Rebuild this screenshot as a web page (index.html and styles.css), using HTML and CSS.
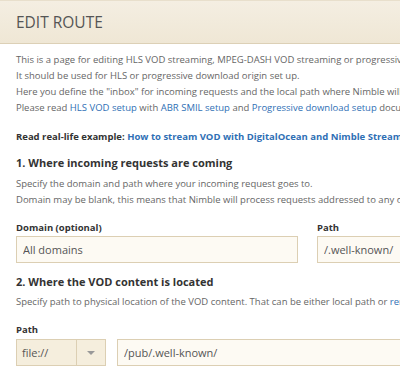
FILE: index.html
```html
<!DOCTYPE html>
<html lang="en">
<head>
    <meta charset="UTF-8">
    <title>Edit route</title>
    <link rel="stylesheet" href="styles.css">
</head>
<body>
<div class="page">
    <div class="page-header">EDIT ROUTE</div>
    <div class="page-body">
        <p class="intro">
            This is a page for editing HLS VOD streaming, MPEG-DASH VOD streaming or progressive download VOD routes.<br>
            It should be used for HLS or progressive download origin set up.<br>
            Here you define the "inbox" for incoming requests and the local path where Nimble will take the content from.<br>
            Please read <a href="#">HLS VOD setup</a> with <a href="#">ABR SMIL setup</a> and <a href="#">Progressive download setup</a> documentation.
        </p>
        <p class="example">Read real-life example: <a href="#">How to stream VOD with DigitalOcean and Nimble Streamer</a></p>

        <h3>1. Where incoming requests are coming</h3>
        <p class="hint">
            Specify the domain and path where your incoming request goes to.<br>
            Domain may be blank, this means that Nimble will process requests addressed to any of your domains.
        </p>
        <div class="row">
            <div class="field">
                <label>Domain (optional)</label>
                <input type="text" class="inp wide" value="All domains">
            </div>
            <div class="field">
                <label>Path</label>
                <input type="text" class="inp wide" value="/.well-known/">
            </div>
        </div>

        <h3 class="second">2. Where the VOD content is located</h3>
        <p class="hint">Specify path to physical location of the VOD content. That can be either local path or <a href="#">remote storage</a>.</p>
        <div class="field vod-path">
            <label>Path</label>
            <div class="row tight">
                <div class="select">
                    <span class="select-value">file://</span>
                    <span class="select-arrow"><i></i></span>
                </div>
                <input type="text" class="inp long" value="/pub/.well-known/">
            </div>
        </div>
    </div>
</div>
</body>
</html>
```

FILE: styles.css
```css
html, body {
  margin: 0;
  overflow: hidden;
  background: #fff;
}
.page {
  width: 760px;
  font-family: "Open Sans", "DejaVu Sans", sans-serif;
  color: #666;
}
.page-header {
  height: 42px;
  line-height: 43px;
  padding: 0 16px;
  border-top: 1px solid #e8dfcc;
  border-bottom: 1px solid #dcd0b6;
  background: linear-gradient(#f4eee2, #efe7d5);
  font-size: 15.5px;
  color: #555;
}
.page-body {
  padding: 8px 16px 0;
}
p {
  margin: 0;
}
a {
  color: #2f6fb5;
  text-decoration: none;
}
.intro {
  font-size: 9.5px;
  line-height: 16px;
}
.example {
  margin-top: 13px;
  font-size: 9.5px;
  line-height: 16px;
  font-weight: bold;
  color: #333;
}
h3 {
  margin: 10px 0 0;
  font-size: 11px;
  line-height: 16px;
  color: #333;
}
h3.second {
  margin-top: 11px;
}
.hint {
  margin-top: 5px;
  font-size: 9.5px;
  line-height: 16px;
}
h3.second + .hint {
  margin-top: 4px;
}
.row {
  display: flex;
  gap: 19px;
  margin-top: 13px;
}
.row.tight {
  gap: 11px;
  margin-top: 0;
}
label {
  display: block;
  margin-bottom: 1px;
  font-size: 9.5px;
  line-height: 14px;
  font-weight: bold;
  color: #333;
}
.vod-path {
  margin-top: 13px;
}
.vod-path label {
  margin-bottom: 2px;
}
.inp {
  box-sizing: border-box;
  height: 27px;
  padding: 0 6px;
  border: 1px solid #dccfb3;
  background: #fdfaf3;
  font-family: inherit;
  font-size: 11px;
  color: #555;
  outline: none;
}
.inp.wide {
  width: 282px;
}
.inp.long {
  width: 420px;
}
.select {
  box-sizing: border-box;
  display: flex;
  width: 90px;
  height: 27px;
  border: 1px solid #dccfb3;
  background: #f5eedd;
  font-size: 11px;
  color: #555;
}
.select-value {
  flex: 1;
  padding-left: 5px;
  line-height: 25px;
}
.select-arrow {
  width: 28px;
  border-left: 1px solid #dccfb3;
  display: flex;
  align-items: center;
  justify-content: center;
}
.select-arrow i {
  width: 0;
  height: 0;
  border-left: 4px solid transparent;
  border-right: 4px solid transparent;
  border-top: 4px solid #999;
}
```
